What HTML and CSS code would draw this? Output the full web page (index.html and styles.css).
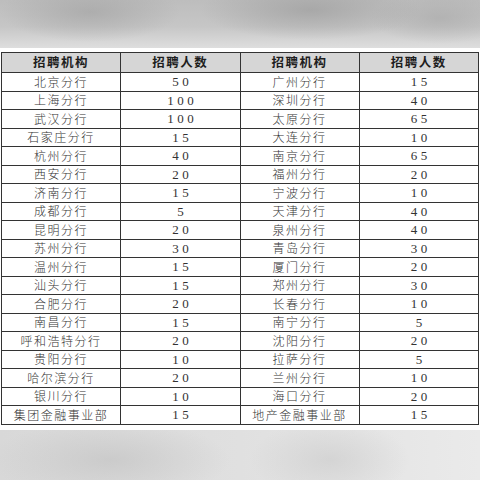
FILE: index.html
```html
<!DOCTYPE html>
<html lang="zh-CN">
<head>
<meta charset="utf-8">
<title>招聘计划</title>
<link rel="stylesheet" href="styles.css">
</head>
<body>
<div class="bg-top"></div>
<div class="sheet">
  <table class="grid">
    <thead>
      <tr><th>招聘机构</th><th>招聘人数</th><th>招聘机构</th><th>招聘人数</th></tr>
    </thead>
    <tbody>
      <tr><td class="org">北京分行</td><td class="num">50</td><td class="org">广州分行</td><td class="num">15</td></tr>
      <tr><td class="org">上海分行</td><td class="num">100</td><td class="org">深圳分行</td><td class="num">40</td></tr>
      <tr><td class="org">武汉分行</td><td class="num">100</td><td class="org">太原分行</td><td class="num">65</td></tr>
      <tr><td class="org">石家庄分行</td><td class="num">15</td><td class="org">大连分行</td><td class="num">10</td></tr>
      <tr><td class="org">杭州分行</td><td class="num">40</td><td class="org">南京分行</td><td class="num">65</td></tr>
      <tr><td class="org">西安分行</td><td class="num">20</td><td class="org">福州分行</td><td class="num">20</td></tr>
      <tr><td class="org">济南分行</td><td class="num">15</td><td class="org">宁波分行</td><td class="num">10</td></tr>
      <tr><td class="org">成都分行</td><td class="num">5</td><td class="org">天津分行</td><td class="num">40</td></tr>
      <tr><td class="org">昆明分行</td><td class="num">20</td><td class="org">泉州分行</td><td class="num">40</td></tr>
      <tr><td class="org">苏州分行</td><td class="num">30</td><td class="org">青岛分行</td><td class="num">30</td></tr>
      <tr><td class="org">温州分行</td><td class="num">15</td><td class="org">厦门分行</td><td class="num">20</td></tr>
      <tr><td class="org">汕头分行</td><td class="num">15</td><td class="org">郑州分行</td><td class="num">30</td></tr>
      <tr><td class="org">合肥分行</td><td class="num">20</td><td class="org">长春分行</td><td class="num">10</td></tr>
      <tr><td class="org">南昌分行</td><td class="num">15</td><td class="org">南宁分行</td><td class="num">5</td></tr>
      <tr><td class="org">呼和浩特分行</td><td class="num">20</td><td class="org">沈阳分行</td><td class="num">20</td></tr>
      <tr><td class="org">贵阳分行</td><td class="num">10</td><td class="org">拉萨分行</td><td class="num">5</td></tr>
      <tr><td class="org">哈尔滨分行</td><td class="num">20</td><td class="org">兰州分行</td><td class="num">10</td></tr>
      <tr><td class="org">银川分行</td><td class="num">10</td><td class="org">海口分行</td><td class="num">20</td></tr>
      <tr><td class="org">集团金融事业部</td><td class="num">15</td><td class="org">地产金融事业部</td><td class="num">15</td></tr>
    </tbody>
  </table>
</div>
<div class="bg-bottom"></div>
</body>
</html>
```

FILE: styles.css
```css
html, body {
  margin: 0;
  padding: 0;
  width: 480px;
  height: 480px;
  overflow: hidden;
  background: #ffffff;
}

.bg-top {
  height: 48px;
  background:
    radial-gradient(ellipse 90px 30px at 90px 12px, rgba(160,160,160,0.6), rgba(160,160,160,0)),
    radial-gradient(ellipse 110px 30px at 310px 10px, rgba(155,155,155,0.65), rgba(155,155,155,0)),
    radial-gradient(ellipse 70px 26px at 440px 18px, rgba(165,165,165,0.55), rgba(165,165,165,0)),
    linear-gradient(to bottom, #bdbdbd 0%, #c6c6c6 55%, #dedede 100%);
}

.sheet {
  background: #ffffff;
  padding: 4px 1px 5px 1px;
}

.grid {
  width: 478px;
  border-collapse: collapse;
  table-layout: fixed;
  border: 1.5px solid #2a2a2a;
  color: #333333;
}

.grid th,
.grid td {
  border: 1px solid #333333;
  padding: 0;
  text-align: center;
  vertical-align: middle;
  white-space: nowrap;
}

.grid th {
  height: 19px;
  background: #d6d6d6;
  font-family: "Noto Sans CJK SC", sans-serif;
  font-weight: 700;
  font-size: 12.5px;
  letter-spacing: 1.5px;
  color: #1e1e1e;
  line-height: 1;
}

.grid td {
  height: 17.5px;
  line-height: 1;
}

.org {
  font-family: "Noto Sans CJK SC", sans-serif;
  font-weight: 300;
  font-size: 12px;
  letter-spacing: 1.5px;
}

.num {
  font-family: "Liberation Serif", serif;
  font-size: 13px;
  letter-spacing: 3.5px;
  text-indent: 3.5px;
}

.bg-bottom {
  height: 60px;
  background:
    radial-gradient(ellipse 120px 40px at 110px 30px, rgba(196,196,196,0.7), rgba(196,196,196,0)),
    radial-gradient(ellipse 80px 40px at 330px 30px, rgba(202,202,202,0.6), rgba(202,202,202,0)),
    linear-gradient(to right, #d8d8d8 0%, #e0e0e0 50%, #eaeaea 100%);
}
```
